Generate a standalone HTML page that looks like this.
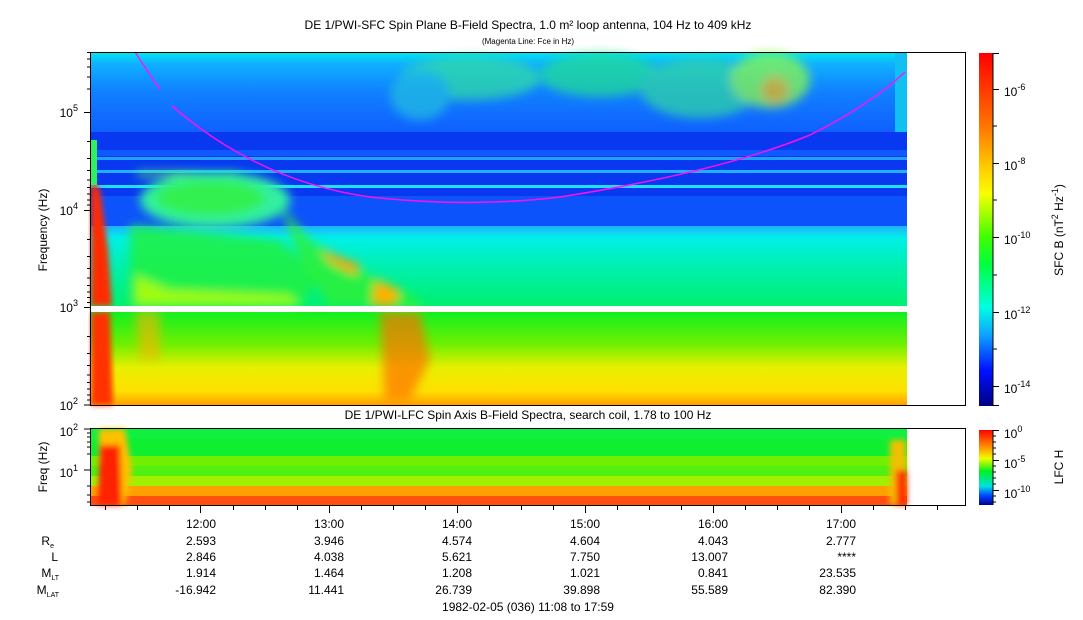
<!DOCTYPE html>
<html><head><meta charset="utf-8"><style>
body{margin:0;background:#fff;width:1083px;height:620px;overflow:hidden}
svg{display:block;font-family:"Liberation Sans",sans-serif}
</style></head><body>
<svg width="1083" height="620" viewBox="0 0 1083 620" xmlns="http://www.w3.org/2000/svg">
<defs>
<linearGradient id="topbg" x1="0" y1="0" x2="0" y2="1">
<stop offset="0" stop-color="#00e8f0"/><stop offset="0.15" stop-color="#10b0ff"/><stop offset="0.5" stop-color="#1080ff"/><stop offset="1" stop-color="#1060ff"/>
</linearGradient>
<linearGradient id="midbg" x1="0" y1="0" x2="0" y2="1">
<stop offset="0" stop-color="#20b0ff"/><stop offset="0.15" stop-color="#00f0e8"/><stop offset="0.5" stop-color="#00f0b0"/><stop offset="1" stop-color="#00f070"/>
</linearGradient>
<linearGradient id="lowbg" x1="0" y1="0" x2="0" y2="1">
<stop offset="0" stop-color="#10f020"/><stop offset="0.35" stop-color="#70f000"/><stop offset="0.6" stop-color="#e8f000"/><stop offset="0.85" stop-color="#ffe000"/><stop offset="1" stop-color="#ffa000"/>
</linearGradient>
<linearGradient id="cb1" x1="0" y1="0" x2="0" y2="1">
<stop offset="0" stop-color="#ff0000"/><stop offset="0.2" stop-color="#ff7000"/><stop offset="0.33" stop-color="#ffd000"/><stop offset="0.4" stop-color="#f8ff00"/><stop offset="0.52" stop-color="#40ff00"/><stop offset="0.6" stop-color="#00ff40"/><stop offset="0.72" stop-color="#00ffe0"/><stop offset="0.8" stop-color="#10a0ff"/><stop offset="0.9" stop-color="#0010ff"/><stop offset="1" stop-color="#000080"/>
</linearGradient>
<linearGradient id="cb2" x1="0" y1="0" x2="0" y2="1">
<stop offset="0" stop-color="#ff0000"/><stop offset="0.25" stop-color="#ffa000"/><stop offset="0.38" stop-color="#f0ff00"/><stop offset="0.55" stop-color="#00f020"/><stop offset="0.75" stop-color="#00e0e0"/><stop offset="0.88" stop-color="#0040ff"/><stop offset="1" stop-color="#000090"/>
</linearGradient>
<filter id="bl"><feGaussianBlur stdDeviation="5"/></filter>
<filter id="bl2"><feGaussianBlur stdDeviation="3"/></filter>
</defs>

<text x="528" y="29" font-size="12" text-anchor="middle">DE 1/PWI-SFC  Spin Plane B-Field Spectra, 1.0 m² loop antenna, 104 Hz to 409 kHz</text>
<text x="528" y="44" font-size="8" text-anchor="middle">(Magenta Line: Fce in Hz)</text>

<rect x="91" y="52" width="816" height="80" fill="url(#topbg)"/>
<rect x="91" y="132" width="816" height="96" fill="#0838f0"/>
<rect x="91" y="150" width="816" height="6" fill="#1058ff"/>
<rect x="91" y="157" width="816" height="3" fill="#20a0ff"/>
<rect x="91" y="170" width="816" height="3" fill="#20b0ff"/>
<rect x="91" y="185" width="816" height="3" fill="#20e0ff"/>
<rect x="91" y="196" width="816" height="30" fill="#1060ff" opacity="0.7"/>
<rect x="91" y="226" width="816" height="80" fill="url(#midbg)"/>
<rect x="91" y="312" width="816" height="93" fill="url(#lowbg)"/>
<g filter="url(#bl)" opacity="0.7">
<ellipse cx="470" cy="78" rx="70" ry="22" fill="#30e0a0"/>
<ellipse cx="600" cy="75" rx="60" ry="22" fill="#20e090"/>
<ellipse cx="700" cy="88" rx="60" ry="30" fill="#30d8a0"/>
<ellipse cx="770" cy="80" rx="40" ry="28" fill="#90ff40"/>
<ellipse cx="775" cy="90" rx="14" ry="14" fill="#ffc000"/>
<ellipse cx="420" cy="95" rx="30" ry="25" fill="#20c0e0"/>
</g>
<g filter="url(#bl)">
<rect x="137" y="172" width="100" height="4" fill="#60ff60"/>
<ellipse cx="215" cy="200" rx="75" ry="28" fill="#30f0a0"/>
<ellipse cx="210" cy="198" rx="55" ry="18" fill="#30f050"/>
<path d="M130 225 L280 240 L320 280 L300 305 L130 305 Z" fill="#20f040" opacity="0.85"/>
<path d="M135 275 L170 290 L290 295 L300 306 L135 306 Z" fill="#c0ff00" opacity="0.8"/>
<path d="M280 205 L310 240 L360 270 L420 300 L420 306 L330 306 L300 260 Z" fill="#30f030" opacity="0.8"/>
<path d="M320 250 L360 265 L355 275 L330 262 Z" fill="#ffa000"/>
<path d="M375 280 L400 290 L395 306 L372 306 Z" fill="#ffb000"/>
<path d="M380 312 L420 312 L430 360 L410 400 L385 400 Z" fill="#ff7000" opacity="0.7"/>
<path d="M135 312 L160 312 L160 360 L140 360 Z" fill="#ffb000" opacity="0.6"/>
</g>
<g filter="url(#bl2)">
<path d="M91 180 L100 190 L108 250 L112 306 L91 306 Z" fill="#ff2a00"/>
<path d="M91 312 L110 312 L113 405 L91 405 Z" fill="#ff3000"/>
</g>
<rect x="91" y="140" width="6" height="45" fill="#30f060"/>
<rect x="895" y="52" width="12" height="80" fill="#10c0f0"/>
<rect x="91" y="306" width="816" height="6" fill="#fff"/>
<path d="M135 52 L160 90" stroke="#ff10ff" stroke-width="1.5" fill="none"/>
<path d="M172 106 Q260 182 370 197 Q470 208 560 197 Q720 172 810 135 Q870 105 905 72" stroke="#ff10ff" stroke-width="1.5" fill="none"/>

<rect x="90.5" y="52.5" width="875" height="353" fill="none" stroke="#000"/>
<g stroke="#000">
<path d="M84 112.5h6M84 210.5h6M84 307.5h6M84 405h6"/>
<path d="M87 52.5h3M87 59h3M87 67h3M87 77h3M87 89h3M87 141.5h3M87 158.5h3M87 170.5h3M87 180h3M87 187.5h3M87 194h3M87 200h3M87 205h3M87 239.5h3M87 256.5h3M87 268.5h3M87 278h3M87 285.5h3M87 292h3M87 297.5h3M87 302.5h3M87 336.5h3M87 353.5h3M87 365.5h3M87 375h3M87 382.5h3M87 389h3M87 395h3M87 400h3"/>
</g>
<g font-size="12" text-anchor="end">
<text x="78" y="117">10<tspan font-size="9" dy="-6">5</tspan></text>
<text x="78" y="215">10<tspan font-size="9" dy="-6">4</tspan></text>
<text x="78" y="312">10<tspan font-size="9" dy="-6">3</tspan></text>
<text x="78" y="410">10<tspan font-size="9" dy="-6">2</tspan></text>
</g>
<text transform="translate(47 230) rotate(-90)" font-size="12" text-anchor="middle">Frequency (Hz)</text>

<rect x="979" y="53" width="14" height="353" fill="url(#cb1)"/>
<g stroke="#000"><path d="M993 53.5h6M993 89.5h6M993 126h4M993 163.5h6M993 200h4M993 237.5h6M993 275h4M993 312.5h6M993 349h4M993 386.5h6M993 405.5h6M993 53v353"/></g>
<g font-size="12">
<text x="1004" y="96">10<tspan font-size="9" dy="-6">-6</tspan></text>
<text x="1004" y="170">10<tspan font-size="9" dy="-6">-8</tspan></text>
<text x="1004" y="244">10<tspan font-size="9" dy="-6">-10</tspan></text>
<text x="1004" y="319">10<tspan font-size="9" dy="-6">-12</tspan></text>
<text x="1004" y="393">10<tspan font-size="9" dy="-6">-14</tspan></text>
</g>
<text transform="translate(1063 230) rotate(-90)" font-size="12" text-anchor="middle">SFC B (nT<tspan font-size="9" dy="-5">2</tspan><tspan dy="5"> Hz</tspan><tspan font-size="9" dy="-5">-1</tspan><tspan dy="5">)</tspan></text>

<text x="528" y="419" font-size="12" text-anchor="middle">DE 1/PWI-LFC  Spin Axis B-Field Spectra, search coil, 1.78 to 100 Hz</text>
<rect x="91" y="429" width="816" height="10" fill="#10f040"/>
<rect x="91" y="439" width="816" height="17" fill="#10ee30"/>
<rect x="91" y="456" width="816" height="10" fill="#70f000"/>
<rect x="91" y="466" width="816" height="10" fill="#50f010"/>
<rect x="91" y="476" width="816" height="10" fill="#a0f000"/>
<rect x="91" y="486" width="816" height="10" fill="#ffa000"/>
<rect x="91" y="496" width="816" height="9" fill="#ff5010"/>
<g filter="url(#bl2)">
<path d="M99 429 L125 429 L132 470 L125 505 L99 505 Z" fill="#ffc000"/>
<path d="M100 445 L120 445 L122 505 L98 505 Z" fill="#ff2000"/>
<rect x="890" y="440" width="16" height="65" fill="#f0c000"/>
<rect x="896" y="470" width="11" height="35" fill="#ff3000"/>
</g>
<rect x="90.5" y="428.5" width="875" height="77" fill="none" stroke="#000"/>
<g stroke="#000">
<path d="M84 429h6M84 470h6M87 433h3M87 437h3M87 442h3M87 447h3M87 454h3M87 486h3M87 495h3M87 502h3"/>
<path d="M105.5 506v4M137.5 506v4M169.5 506v4M200.5 506v7M233.5 506v4M265.5 506v4M297.5 506v4M329.5 506v7M361.5 506v4M393.5 506v4M425.5 506v4M457.5 506v7M489.5 506v4M521.5 506v4M553.5 506v4M585.5 506v7M617.5 506v4M649.5 506v4M681.5 506v4M713.5 506v7M745.5 506v4M777.5 506v4M809.5 506v4M841.5 506v7M873.5 506v4M905.5 506v4M937.5 506v4"/>
</g>
<g font-size="12" text-anchor="end">
<text x="78" y="436">10<tspan font-size="9" dy="-6">2</tspan></text>
<text x="78" y="477">10<tspan font-size="9" dy="-6">1</tspan></text>
</g>
<text transform="translate(47 467) rotate(-90)" font-size="12" text-anchor="middle">Freq (Hz)</text>
<rect x="979" y="430" width="14" height="75" fill="url(#cb2)"/>
<g stroke="#000"><path d="M993 430.5h6M993 460.5h6M993 490.5h6M993 436h3M993 442h3M993 448h3M993 454h3M993 466h3M993 472h3M993 478h3M993 484h3M993 496h3M993 502h3M993 430v75"/></g>
<g font-size="12">
<text x="1004" y="438">10<tspan font-size="9" dy="-6">0</tspan></text>
<text x="1004" y="468">10<tspan font-size="9" dy="-6">-5</tspan></text>
<text x="1004" y="498">10<tspan font-size="9" dy="-6">-10</tspan></text>
</g>
<text transform="translate(1063 467) rotate(-90)" font-size="12" text-anchor="middle">LFC H</text>

<g font-size="12" text-anchor="end">
<text x="216" y="528">12:00</text><text x="344" y="528">13:00</text><text x="472" y="528">14:00</text><text x="600" y="528">15:00</text><text x="728" y="528">16:00</text><text x="856" y="528">17:00</text>
<text x="216" y="545">2.593</text><text x="344" y="545">3.946</text><text x="472" y="545">4.574</text><text x="600" y="545">4.604</text><text x="728" y="545">4.043</text><text x="856" y="545">2.777</text>
<text x="216" y="561">2.846</text><text x="344" y="561">4.038</text><text x="472" y="561">5.621</text><text x="600" y="561">7.750</text><text x="728" y="561">13.007</text><text x="856" y="561">****</text>
<text x="216" y="577">1.914</text><text x="344" y="577">1.464</text><text x="472" y="577">1.208</text><text x="600" y="577">1.021</text><text x="728" y="577">0.841</text><text x="856" y="577">23.535</text>
<text x="216" y="594">-16.942</text><text x="344" y="594">11.441</text><text x="472" y="594">26.739</text><text x="600" y="594">39.898</text><text x="728" y="594">55.589</text><text x="856" y="594">82.390</text>
<text x="54" y="545">R<tspan font-size="7" dy="3">e</tspan></text>
<text x="58" y="561">L</text>
<text x="59" y="577">M<tspan font-size="7" dy="3">LT</tspan></text>
<text x="59" y="594">M<tspan font-size="7" dy="3">LAT</tspan></text>
</g>
<text x="528" y="611" font-size="12" text-anchor="middle">1982-02-05 (036) 11:08 to 17:59</text>
</svg>
</body></html>
